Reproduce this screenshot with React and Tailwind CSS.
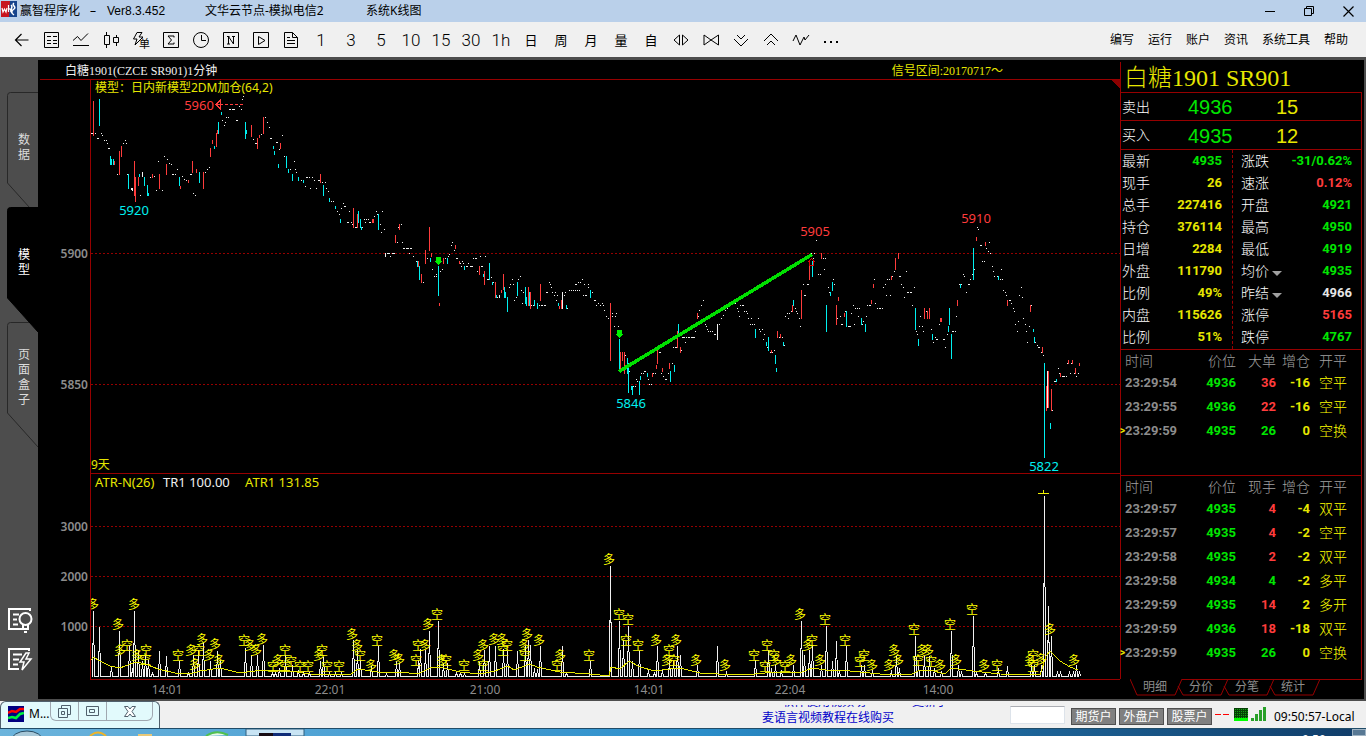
import React from "react";

const CJK = "font-['Noto_Sans','Noto_Sans_CJK_SC',sans-serif]";
const SONG = "font-['Liberation_Serif','Noto_Sans_CJK_SC',serif]";
const ARIAL = "font-['Liberation_Sans','Noto_Sans_CJK_SC',sans-serif]";
const NUMERIC = "font-['Roboto','Noto_Sans_CJK_SC',sans-serif]";

// bars are "x,top,bottom", one pixel wide
const RED_BARS =
  "93,101,136 134,161,196 135,177,202 119,151,175 121,146,157 114,161,165 138,177,186 159,174,189 152,174,178 166,164,175 192,161,173 188,180,183 180,186,189 196,169,173 203,172,189 210,148,157 212,140,144 216,133,147 217,130,134 251,125,137 257,138,149 259,135,138 263,117,134 280,143,149 320,174,183 " +
  "353,208,228 357,214,228 372,219,223 373,219,223 399,224,230 395,235,243 429,227,251 425,250,264 431,253,257 418,261,267 421,274,283 439,303,306 443,258,264 455,245,249 459,261,264 479,266,275 484,271,285 495,282,298 501,290,293 503,274,290 528,287,306 530,292,309 540,284,301 559,306,309 561,300,309 610,303,361 620,352,371 622,352,361 624,352,374 677,331,348 657,349,364 656,365,369 652,373,377 662,368,372 669,363,369 680,347,353 697,313,319 " +
  "809,265,280 801,290,319 792,305,312 777,331,338 780,334,338 771,350,353 821,253,259 838,297,301 836,305,325 844,313,317 873,284,288 871,300,304 895,258,270 898,253,259 891,276,280 924,308,319 927,311,319 929,308,319 940,318,322 941,318,322 957,300,306 976,237,241 985,242,246 1007,300,306 1030,305,312 1042,347,353 1046,386,411 1048,371,408 1051,389,411 1060,373,377 1068,360,364 1072,360,364 1075,368,374 1079,363,366";

const CYAN_BARS =
  "99,99,126 110,156,165 111,159,165 113,159,165 128,174,189 139,174,177 144,177,186 147,185,196 148,193,196 179,177,186 199,172,183 214,146,149 218,122,134 221,112,115 245,122,139 246,130,134 273,146,149 274,151,155 278,164,168 286,156,168 288,169,173 292,174,181 298,177,181 303,180,183 323,185,196 329,198,202 335,206,209 " +
  "340,219,223 358,211,223 360,219,228 361,227,230 378,214,230 417,261,267 419,266,280 430,258,262 438,266,296 447,258,264 464,266,270 483,274,277 489,263,280 492,282,285 496,295,298 504,287,298 505,292,298 507,297,312 517,282,296 525,287,304 526,297,306 529,292,306 534,300,306 537,303,309 558,303,306 566,305,309 590,290,298 619,339,371 627,358,374 628,363,393 631,386,390 632,386,395 639,381,395 640,376,380 647,373,377 670,371,382 674,365,372 678,324,337 " +
  "812,261,277 793,300,306 755,329,338 766,342,346 768,337,351 775,355,364 776,368,372 783,342,346 830,292,296 832,282,291 826,305,332 846,311,327 861,318,325 865,324,332 915,308,330 918,339,346 932,334,340 949,308,325 948,326,332 951,334,359 960,284,288 973,248,280 998,276,280 1033,329,332 1034,337,343 1044,363,458 1050,423,429 1056,379,382";

const WHITE_BARS = "131,188,190 132,188,191 142,172,177 385,253,257 499,295,298 562,292,309 717,324,340 1047,371,408";

// flat minutes are "x,y" single pixels
const TICKS =
  "91,133 92,133 95,133 97,138 98,138 101,133 102,135 104,140 106,140 107,143 108,148 109,148 117,174 123,143 125,140 126,143 127,174 140,195 150,177 154,176 156,190 162,190 158,161 164,156 167,159 169,163 171,164 172,174 173,174 175,174 177,169 182,176 184,179 186,180 190,174 191,174 193,193 195,195 205,172 207,169 209,167 222,120 224,125 225,122 226,117 228,117 229,109 230,109 232,109 233,109 234,109 236,120 237,120 239,106 241,109 243,96 242,99 253,139 255,143 256,143 261,134 265,117 267,122 269,127 270,138 271,138 276,142 277,142 279,149 282,135 284,156 290,169 294,161 295,169 296,172 301,180 306,177 307,177 309,177 305,186 310,188 312,177 314,180 316,188 318,180 319,180 322,182 325,182 326,188 328,191 331,201 333,201 337,211 339,214 " +
  "341,208 343,203 344,206 345,206 349,211 347,222 348,222 351,222 352,224 355,227 356,227 362,227 364,219 366,219 368,219 365,222 369,222 370,222 374,216 376,211 377,214 382,211 380,224 384,229 381,232 397,242 402,242 401,224 398,227 403,248 404,248 406,248 407,248 408,248 410,248 411,248 387,253 388,253 389,253 392,253 393,253 394,253 390,256 409,253 413,256 416,261 423,282 427,258 432,269 434,276 436,274 436,276 442,269 440,271 445,258 448,256 449,254 451,245 452,242 454,250 456,258 457,258 460,263 462,261 461,266 463,263 466,266 467,266 470,266 471,266 472,266 468,263 473,258 475,258 476,258 480,256 485,256 477,271 481,266 482,266 487,279 488,279 491,277 493,282 497,297 509,287 510,284 512,279 513,284 514,300 516,297 518,279 520,276 521,290 523,292 522,303 531,305 533,305 539,305 541,305 542,305 544,305 545,305 546,292 547,292 549,282 550,284 551,287 552,292 555,292 554,295 556,300 557,295 565,292 564,295 567,308 569,290 571,290 573,290 575,290 577,290 579,290 575,284 576,284 578,282 580,282 582,279 584,284 588,284 583,295 585,295 586,295 588,287 592,292 594,300 595,300 596,305 598,303 600,305 602,303 603,305 604,310 606,316 608,318 612,313 612,316 615,316 616,313 614,326 618,326 625,355 629,371 633,386 635,386 636,379 637,381 641,373 643,373 644,371 645,371 648,379 649,384 651,384 653,373 655,373 659,352 660,352 661,373 663,376 665,379 666,379 668,373 672,363 673,347 675,347 676,347 681,350 685,342 682,337 683,337 684,337 686,337 688,337 689,337 691,337 692,337 693,337 694,337 695,331 696,326 698,316 699,310 701,305 703,300 705,324 706,326 707,329 708,331 710,331 712,331 714,334 715,334 719,324 721,318 723,315 725,310 727,308 711,313 " +
  "735,303 737,308 738,311 739,316 740,305 742,305 743,305 744,311 746,311 747,313 748,318 751,318 750,324 752,324 754,324 758,318 759,329 762,329 760,331 764,334 763,339 767,347 770,352 772,352 774,350 779,337 782,337 784,345 785,316 787,313 789,313 788,318 791,311 795,308 796,311 797,313 799,318 800,326 803,284 807,284 808,284 804,295 805,295 811,253 814,253 813,258 816,240 818,274 820,274 824,269 825,258 823,258 828,287 829,292 833,279 834,284 837,318 840,316 841,324 842,324 845,311 848,326 849,326 850,326 851,313 854,324 853,305 855,308 857,308 859,308 858,316 862,324 863,321 866,316 867,305 869,305 870,305 874,279 875,303 877,308 879,308 880,308 882,308 883,287 885,284 887,279 889,279 886,295 890,295 892,276 894,271 899,276 900,276 901,284 903,287 904,297 906,271 907,292 908,292 910,292 911,292 914,287 912,305 916,331 917,334 919,326 922,326 920,316 923,331 926,311 931,329 933,342 935,337 936,339 937,339 939,324 943,339 944,339 945,347 947,334 952,331 953,331 955,331 956,316 959,284 961,284 963,274 964,276 966,292 968,284 969,284 970,279 972,274 974,269 977,227 978,229 980,245 981,245 982,261 984,261 986,248 988,251 989,242 990,253 992,266 993,271 994,276 997,276 1000,279 1002,279 1001,269 1003,290 1005,292 1006,295 1009,300 1010,300 1011,303 1013,308 1014,311 1015,324 1017,331 1018,321 1019,295 1021,287 1022,297 1023,318 1025,324 1026,331 1027,342 1029,326 1031,305 1035,342 1037,345 1038,347 1039,347 1041,352 1043,355 1052,410 1054,381 1055,381 1058,368 1059,373 1062,376 1063,376 1064,376 1066,376 1067,363 1071,363 1070,373 1074,373 1076,376 1078,373";

// peaks of the TR line, "x,y"
const SPIKES =
  "93,611 99,627 111,666 119,631 129,645 132,668 134,611 138,650 142,661 145,655 148,660 152,672 159,651 166,656 179,661 188,672 193,655 198,650 203,643 210,661 217,651 220,660 245,648 251,655 257,655 263,645 272,672 275,672 279,668 285,655 292,665 298,670 303,672 309,672 320,661 323,657 329,672 335,672 341,672 353,640 357,650 360,660 371,666 378,646 386,673 396,661 399,663 418,660 420,649 425,650 429,631 438,621 443,664 447,663 456,672 460,672 464,673 479,662 484,650 489,646 495,646 503,649 507,651 517,651 525,646 528,640 530,645 534,668 537,669 540,646 562,646 566,672 590,661 610,566 619,621 623,640 628,626 632,661 639,651 648,670 654,672 657,646 662,670 669,660 673,661 677,646 680,655 697,665 717,646 726,671 " +
  "755,660 768,650 771,668 775,665 781,670 793,665 801,621 804,655 809,650 812,645 821,665 826,626 832,661 836,641 839,670 846,646 861,665 864,665 872,670 891,670 896,656 899,668 915,636 918,665 924,656 929,656 934,668 941,671 951,631 958,665 961,671 973,616 976,672 985,672 998,668 1007,666 1031,665 1034,665 1041,665 1044,496 1048,606 1051,636 1057,671 1060,671 1069,671 1073,671 1076,665 1079,671";

const ATR_LINE =
  "91,660 94,657 98,660 110,666 120,668 133,663 138,662 148,665 158,669 175,673 190,674 200,671 220,668 240,673 262,670 290,671 310,674 350,675 358,669 378,672 400,672 418,674 430,668 440,667 460,672 480,674 495,671 508,666 514,670 530,664 537,667 560,672 590,674 609,676 611,667 620,669 629,661 640,667 655,671 670,669 680,668 700,673 735,675 755,674 775,672 800,673 812,668 826,670 850,671 880,674 910,675 918,671 930,670 945,674 951,668 973,671 1000,674 1040,675 1046,656 1050,651 1060,661 1070,667 1078,670";

const LONG_MARKS =
  "93,604 134,604 118,624 120,650 137,655 191,650 202,639 195,664 209,655 215,644 219,660 250,645 256,650 262,639 278,660 319,655 352,634 357,645 371,665 394,655 399,659 425,645 428,624 442,660 478,655 483,645 494,639 502,639 524,645 527,634 539,640 560,655 609,559 656,640 667,660 676,640 696,660 725,665 776,660 791,660 800,614 808,645 820,660 872,665 889,665 894,650 898,660 922,650 928,650 940,665 956,660 984,665 1030,660 1041,659 1050,629 1074,660";

const SHORT_MARKS =
  "127,645 146,650 145,659 178,655 199,650 244,640 273,666 285,650 291,661 285,666 300,666 308,666 322,650 327,666 339,666 360,655 377,640 416,660 418,645 437,614 446,660 464,665 483,665 503,650 507,645 525,655 557,665 589,655 619,614 628,619 626,640 638,645 669,650 674,660 754,655 767,645 774,655 765,666 785,666 812,640 825,619 845,640 860,661 864,655 914,629 918,660 931,661 950,624 972,609 997,665 1033,655 1033,666";

const parse = (text) => text.split(" ").map((item) => item.split(",").map(Number));
const barPath = (text) => parse(text).map(([x, a, b]) => `M${x} ${a}h1v${b - a}h-1z`).join("");
const tickPath = (text) => parse(text).map(([x, y]) => `M${x} ${y}h1v1h-1z`).join("");
const trPath = "M91 676" + parse(SPIKES).map(([x, y]) => `L${x - 1} 676L${x} ${y}L${x + 1} 676`).join("");

const QUOTES_LEFT = [
  ["最新", "4935", "text-[#00e600]"],
  ["现手", "26", "text-[#e6e600]"],
  ["总手", "227416", "text-[#e6e600]"],
  ["持仓", "376114", "text-[#e6e600]"],
  ["日增", "2284", "text-[#e6e600]"],
  ["外盘", "111790", "text-[#e6e600]"],
  ["比例", "49%", "text-[#e6e600]"],
  ["内盘", "115626", "text-[#e6e600]"],
  ["比例", "51%", "text-[#e6e600]"],
];

const QUOTES_RIGHT = [
  ["涨跌", "-31/0.62%", "text-[#00e600]"],
  ["速涨", "0.12%", "text-[#ff3c3c]"],
  ["开盘", "4921", "text-[#00e600]"],
  ["最高", "4950", "text-[#00e600]"],
  ["最低", "4919", "text-[#00e600]"],
  ["均价", "4935", "text-[#00e600]", true],
  ["昨结", "4966", "text-[#e6e6e6]", true],
  ["涨停", "5165", "text-[#ff3c3c]"],
  ["跌停", "4767", "text-[#00e600]"],
];

const BIG_TRADES = [
  ["23:29:54", "4936", "36", "-16", "空平", "text-[#ff3c3c]"],
  ["23:29:55", "4936", "22", "-16", "空平", "text-[#ff3c3c]"],
  ["23:29:59", "4935", "26", "0", "空换", "text-[#00e600]"],
];

const TRADES = [
  ["23:29:57", "4935", "4", "-4", "双平", "text-[#ff3c3c]"],
  ["23:29:57", "4935", "4", "-2", "空平", "text-[#ff3c3c]"],
  ["23:29:58", "4935", "2", "-2", "双平", "text-[#ff3c3c]"],
  ["23:29:58", "4934", "4", "-2", "多平", "text-[#00e600]"],
  ["23:29:59", "4935", "14", "2", "多开", "text-[#ff3c3c]"],
  ["23:29:59", "4936", "18", "-18", "双平", "text-[#ff3c3c]"],
  ["23:29:59", "4935", "26", "0", "空换", "text-[#00e600]"],
];

const Icon = ({ children, size = 18 }) => (
  <svg width={size} height={size} viewBox="0 0 18 18" fill="none" stroke="#000" strokeWidth="1" aria-hidden="true">
    {children}
  </svg>
);

const TOOLS = [
  ["返回", <Icon key="i"><path d="M16.5 9H4M9.5 3L3.5 9l6 6" strokeWidth="1.2" /></Icon>],
  ["报价", <Icon key="i"><path d="M2.5 1.5h14v15h-14zM5 5.5h4M11 5.5h4M5 9.5h4M11 9.5h4M5 12.5h4M11 12.5h4" /></Icon>],
  ["分时", <Icon key="i"><path d="M1 9.5L5.5 5.5 9 9.5 16 2.5M1 14.5h16" /></Icon>],
  ["K线", <Icon key="i"><path d="M2.5 4.5h5v9h-5zM4.5 1v3M4.5 14v3M11.5 6.5h5v5h-5zM14.5 4v2M14.5 12v3" /></Icon>],
  [
    "闪电下单",
    <span key="i" className="relative block h-[18px] w-[18px]">
      <svg width="12" height="16" viewBox="0 0 12 16" fill="none" stroke="#000" className="absolute left-0 top-0" aria-hidden="true">
        <path d="M5 1.5h5L7 6h4L3 14l2-6H1.5z" />
      </svg>
      <span className="absolute -bottom-px left-[7px] text-[11px] leading-[12px]">单</span>
    </span>,
  ],
  ["求和", <Icon key="i"><path d="M1.5 1.5h15v15h-15zM12 6.5v-1.5H6l3.5 4L6 13h6v-1.5" /></Icon>],
  ["时间", <Icon key="i"><circle cx="9" cy="9" r="7.5" /><path d="M9.5 4v5.5H14" /></Icon>],
  ["N", <Icon key="i"><path d="M1.5 1.5h15v15h-15zM5 5.5h2.5M5 13h3M6.5 5.5V13M6.5 5.5l5 7.5M11.5 13V5.5M10 5.5h3" /></Icon>],
  ["运行模型", <Icon key="i"><path d="M1.5 1.5h15v15h-15zM6.5 5.5v8l6.5-4z" /></Icon>],
  ["文档", <Icon key="i"><path d="M2.5 1.5h8l5 5v10h-13zM10.5 1.5v5h5M5 6.5h3M5 9.5h8M5 12.5h8" /></Icon>],
  ["1分钟", "1"],
  ["3分钟", "3"],
  ["5分钟", "5"],
  ["10分钟", "10"],
  ["15分钟", "15"],
  ["30分钟", "30"],
  ["1小时", "1h"],
  ["日线", "日"],
  ["周线", "周"],
  ["月线", "月"],
  ["量", "量"],
  ["自定义", "自"],
  ["放宽", <Icon key="i"><path d="M7.5 4v10L2 9zM10.5 4v10L16 9z" /></Icon>],
  ["缩窄", <Icon key="i"><path d="M2 4v10l7-5zM16.5 4v10L9 9z" /></Icon>],
  ["下移", <Icon key="i"><path d="M5 4l4 4 4-4M2 8l7 7 7-7" /></Icon>],
  ["上移", <Icon key="i"><path d="M5 14l4-4 4 4M2 10l7-7 7 7" /></Icon>],
  ["指标", <Icon key="i"><path d="M1 10l3-6 4 10 4-8 1 3 4-5" /></Icon>],
  ["更多", <Icon key="i"><path d="M2 10h2v2h-2zM8 10h2v2h-2zM14 10h2v2h-2z" fill="#000" stroke="none" /></Icon>],
];

const TitleBar = () => (
  <header className="flex h-[22px] items-center bg-[#bad0ea] text-xs text-black">
    <svg width="16" height="16" viewBox="0 0 16 16" className="mb-[5px] ml-px" aria-hidden="true">
      <path fill="#c8141e" d="M0 0h11v16H0z" />
      <path fill="#17448c" d="M9 0h7v16H8z" />
      <path d="M13 2c-3 2 3 4 0 6s-3 4 0 6M10 4c3 2-2 5 1 8" stroke="#fff" fill="none" strokeWidth="1.5" />
      <path d="M1 7l1 4 1.5-3L5 11l1-4M7.5 4v7M7.5 8.5C9 7 10 8 10 11" stroke="#fff" fill="none" strokeWidth="1.2" />
    </svg>
    <h1 className="ml-[3px] flex leading-5">
      <span className="w-[70px]">赢智程序化</span>
      <span className="w-[17px]">–</span>
      <span className={`w-[98px] text-[12px] ${ARIAL}`}>Ver8.3.452</span>
      <span className="w-[161px]">文华云节点-模拟电信2</span>
      <span>系统K线图</span>
    </h1>
    <div className="ml-auto flex items-center gap-[7px] pr-[2px]">
      <button aria-label="最小化" className="grid h-[22px] w-8 place-items-center">
        <svg width="10" height="10" stroke="#000" fill="none"><path d="M0 5.5h10" /></svg>
      </button>
      <button aria-label="还原" className="grid h-[22px] w-8 place-items-center">
        <svg width="10" height="10" stroke="#000" fill="none"><path d="M.5 2.5h7v7h-7zM2.5 2.5v-2h7v7h-2" /></svg>
      </button>
      <button aria-label="关闭" className="grid h-[22px] w-8 place-items-center">
        <svg width="11" height="11" stroke="#000" fill="none" strokeWidth="1.2"><path d="M.5.5l10 10M10.5.5l-10 10" /></svg>
      </button>
    </div>
  </header>
);

const Toolbar = () => (
  <nav className="flex h-[35px] items-center bg-[#f0f0f0] pl-[6px] pr-[18px] text-black">
    {TOOLS.map(([label, content]) => (
      <button
        key={label}
        aria-label={label}
        className={`grid h-[30px] w-[30px] shrink-0 place-items-center leading-none ${
          /^\d/.test(label) ? "pt-[2px] font-['Roboto'] text-[17px] font-light" : "pt-px text-[13px]"
        }`}
      >
        {content}
      </button>
    ))}
    <div className="ml-auto flex gap-[14px] whitespace-nowrap text-xs">
      {["编写", "运行", "账户", "资讯", "系统工具", "帮助"].map((item) => (
        <button key={item}>{item}</button>
      ))}
    </div>
  </nav>
);

const SideTab = ({ text, active }) => (
  <button className={`relative h-[115px] w-[31px] ${active ? "z-10 text-white" : "text-[#dcdcdc]"}`}>
    <svg width="31" height="126" viewBox="0 0 31 126" className="absolute left-0 top-0" aria-hidden="true">
      <path
        d="M31 .5H3.5Q.5.5.5 3.5V91L31 125"
        fill={active ? "#000" : "#4d4d4d"}
        stroke={active ? "#000" : "#282828"}
      />
    </svg>
    <span className="relative ml-[11px] block w-3 pb-[6px] text-xs leading-[15px]">{text}</span>
  </button>
);

const Sidebar = () => (
  <aside className="flex w-[38px] shrink-0 flex-col pl-[7px] pt-8">
    <SideTab text="数据" />
    <SideTab text="模型" active />
    <SideTab text="页面盒子" />
    <div className="mb-[26px] mt-auto flex flex-col gap-[14px]">
      <button aria-label="帮助提示">
        <svg width="26" height="26" viewBox="0 0 26 26" fill="none" stroke="#fff" strokeWidth="2">
          <path d="M23 4V2H2v20h13M6 7.5h6M6 12.5h4M6 17.5h5" />
          <circle cx="18.5" cy="12" r="6" />
          <path d="M16 18v4h5v-4M17 25h3" />
        </svg>
      </button>
      <button aria-label="快速编辑">
        <svg width="26" height="26" viewBox="0 0 26 26" fill="none" stroke="#fff" strokeWidth="2">
          <path d="M22 4V2H2v20h10M6 7.5h9M6 12.5h6M6 17.5h5" />
          <path d="M19 6l-6 9h4l-2 8 9-11h-5l3-6z" strokeWidth="1.5" />
        </svg>
      </button>
    </div>
  </aside>
);

const PricePane = () => (
  <svg viewBox="38 80 1082 394" className="block w-full" shapeRendering="crispEdges" role="img" aria-label="白糖1901 1分钟">
    <path d="M91 253.5H1120M91 384.5H1120" stroke="#960000" strokeDasharray="2 2" />
    <path d="M90.5 80V474M91 473.5H1120" stroke="#960000" />
    <path d="M1110 79h10v10z" fill="#8c0000" />
    <path d={barPath(CYAN_BARS)} fill="#00f0f0" />
    <path d={barPath(RED_BARS)} fill="#ff3c3c" />
    <path d={barPath(WHITE_BARS)} fill="#f0f0f0" />
    <path d={tickPath(TICKS)} fill="#f0f0f0" />
    <path d="M619 371.5L812 254.5" stroke="#00e000" strokeWidth="3.5" />
    <path d="M436 257h5v4h1l-3.5 4-3.5-4h1zM617 330h5v4h1l-3.5 4-3.5-4h1z" fill="#00f000" />
    <path d="M809.5 265.5v-4h-1l3-3 3 3h-1v4z" stroke="#e00000" fill="none" />
    <path d="M243 104.5H221" stroke="#ff3c3c" strokeDasharray="3 2" />
    <path d="M216 104.5l4-4v8zM216 104.5h5" stroke="#ff3c3c" fill="none" />
    <g fontSize="12" className={CJK}>
      <text x="95" y="92" fill="#e6e600">模型：日内新模型2DM加仓(64,2)</text>
      <text x="91" y="469" fill="#e6e600">9天</text>
      <g fontSize="13" textAnchor="middle">
        <text x="199" y="110" fill="#ff3c3c">5960</text>
        <text x="815" y="236" fill="#ff3c3c">5905</text>
        <text x="976" y="223" fill="#ff3c3c">5910</text>
        <text x="134" y="215" fill="#00f0f0">5920</text>
        <text x="631" y="408" fill="#00f0f0">5846</text>
        <text x="1044" y="471" fill="#00f0f0">5822</text>
      </g>
      <g fill="#8c8c8c" textAnchor="end" fontWeight="600">
        <text x="88" y="258">5900</text>
        <text x="88" y="389">5850</text>
      </g>
    </g>
  </svg>
);

const AtrPane = () => (
  <svg viewBox="38 474 1082 225" className="block w-full" shapeRendering="crispEdges" role="img" aria-label="ATR-N(26)">
    <defs>
      <clipPath id="plot">
        <path d="M91 474H1120V679H91z" />
      </clipPath>
    </defs>
    <path d="M91 526.5H1120M91 576.5H1120M91 626.5H1120" stroke="#960000" strokeDasharray="2 2" />
    <path d="M90.5 474V679.5H1120" stroke="#960000" fill="none" />
    <path d={trPath + "L1080 676"} stroke="#f0f0f0" fill="none" transform="translate(.5 .5)" strokeLinejoin="bevel" />
    <polyline points={ATR_LINE} stroke="#e6e600" fill="none" />
    <path d="M1038 493.5h11M1043.5 490v3" stroke="#f0f000" />
    <g className={CJK} fontSize="12" fill="#ffff00" textAnchor="middle" clipPath="url(#plot)">
      {parse(LONG_MARKS).map(([x, y], i) => (
        <text key={i} x={x} y={y + 5}>多</text>
      ))}
      {parse(SHORT_MARKS).map(([x, y], i) => (
        <text key={i} x={x} y={y + 5}>空</text>
      ))}
    </g>
    <g className={CJK} fontSize="12">
      <g fontSize="13">
        <text x="95" y="487" fill="#e6e600">ATR-N(26)</text>
        <text x="163" y="487" fill="#f0f0f0">TR1 100.00</text>
        <text x="245" y="487" fill="#e6e600">ATR1 131.85</text>
      </g>
      <g fill="#8c8c8c" textAnchor="end" fontWeight="600">
        <text x="88" y="531">3000</text>
        <text x="88" y="581">2000</text>
        <text x="88" y="631">1000</text>
      </g>
      <g fill="#8c8c8c" textAnchor="middle">
        <text x="167" y="694">14:01</text>
        <text x="330" y="694">22:01</text>
        <text x="485" y="694">21:00</text>
        <text x="649" y="694">14:01</text>
        <text x="790" y="694">22:04</text>
        <text x="938" y="694">14:00</text>
      </g>
    </g>
  </svg>
);

const Chart = () => (
  <section className="min-w-0 flex-1">
    <div className={`ml-[2px] flex h-5 justify-between border-b border-[#960000] pl-[25px] pr-[117px] text-xs leading-[22px] ${SONG}`}>
      <span className="text-[#f0f0f0]">白糖1901(CZCE SR901)1分钟</span>
      <span className="text-[#e6e600]">信号区间:20170717～</span>
    </div>
    <PricePane />
    <AtrPane />
  </section>
);

const QuoteList = ({ rows, className }) => (
  <dl className={className}>
    {rows.map(([name, value, color, menu], i) => (
      <div key={i} className="flex h-[22px] items-center justify-between">
        <dt className="flex items-center text-sm font-light text-white">
          {name}
          {menu && <span className="ml-[3px] mt-1 border-x-[5px] border-t-[5px] border-x-transparent border-t-[#a0a0a0]" />}
        </dt>
        <dd className={`text-[13px] font-bold ${NUMERIC} ${color}`}>{value}</dd>
      </div>
    ))}
  </dl>
);

const TradeTable = ({ volume, rows, className }) => (
  <div className={`border-t border-[#960000] ${className}`}>
    <table className={`w-full table-fixed text-right text-[13px] font-bold ${NUMERIC}`}>
      <thead className="text-sm text-[#a0a0a0]">
        <tr className="h-[21px] leading-5 [&>th]:p-0 [&>th]:font-light">
          <th className="w-[75px] text-left"><span className="pl-1">时间</span></th>
          <th className="w-[40px]">价位</th>
          <th className="w-[40px]">{volume}</th>
          <th className="w-[34px]">增仓</th>
          <th className="text-left"><span className="pl-[9px]">开平</span></th>
        </tr>
      </thead>
      <tbody>
        {rows.map(([time, price, lots, change, type, color], i) => (
          <tr key={i} className="h-6 leading-5">
            <td className="relative pl-1 text-left text-[#8c8c8c]">
              {i === rows.length - 1 && <span className="absolute -left-px text-[10px] text-[#e6e600]">&gt;</span>}
              {time}
            </td>
            <td className="text-[#00e600]">{price}</td>
            <td className={color}>{lots}</td>
            <td className="text-[#e6e600]">{change}</td>
            <td className="pl-[9px] text-left text-sm font-light text-[#ffff00]">{type}</td>
          </tr>
        ))}
      </tbody>
    </table>
  </div>
);

const QuotePanel = () => (
  <section className="flex w-[244px] shrink-0 flex-col pr-[2px] pt-[2px]">
    <div className="flex flex-1 flex-col border-l border-[#960000]">
      <h2 className={`h-[30px] whitespace-nowrap pl-[3px] text-2xl font-light leading-[32px] text-[#e6e600] ${SONG}`}>白糖1901 SR901</h2>
      <div className="flex-1 border-r border-[#960000]">
        {[["卖出", "4936", "15", "h-[28px]"], ["买入", "4935", "12", "h-[29px]"]].map(([name, price, lots, height]) => (
          <div key={name} className={`flex items-center border-t border-[#960000] pl-px ${height}`}>
            <span className="w-[66px] text-sm font-light text-white">{name}</span>
            <span className={`w-[88px] pt-px text-xl text-[#00e600] ${ARIAL}`}>{price}</span>
            <span className={`pt-px text-xl text-[#e6e600] ${ARIAL}`}>{lots}</span>
          </div>
        ))}
        <div className="flex h-[200px] border-t border-[#960000]">
          <QuoteList rows={QUOTES_LEFT} className="w-[112px] border-r border-dashed border-[#960000] pl-px pr-[10px]" />
          <QuoteList rows={QUOTES_RIGHT} className="flex-1 pl-2 pr-[9px]" />
        </div>
        <TradeTable volume="大单" rows={BIG_TRADES} className="h-[126px]" />
        <TradeTable volume="现手" rows={TRADES} className="h-[204px]" />
      </div>
    </div>
    <div className="flex h-5 pl-[10px] text-xs text-[#8c8c8c]">
      {["明细", "分价", "分笔", "统计"].map((name, i) => (
        <button key={name} className="relative h-4 w-[46px] pl-1 leading-4">
          <svg width="55" height="17" viewBox="0 0 55 17" fill="none" stroke="#960000" className="absolute left-0 top-0" aria-hidden="true">
            <path d={i === 0 ? "M0 0l7 16h38l7-16" : "M2 7l5 9h38l7-16M6 .5h48"} />
          </svg>
          {name}
        </button>
      ))}
      <span className="ml-[8px] h-px flex-1 bg-[#960000]" />
    </div>
  </section>
);

const StatusBar = () => (
  <footer className="flex h-[27px] items-center bg-[#f0f0f0] text-xs text-black">
    <div className="flex h-full w-[160px] items-start rounded-t-md border border-b-0 border-[#50606c] bg-[#e2fafc] pl-[7px]">
      <svg width="16" height="16" viewBox="0 0 16 16" className="mt-1 shrink-0" aria-hidden="true">
        <path fill="#000080" d="M0 0h16v16H0z" />
        <path d="M0 7l4-2 4 1 4-3h4" stroke="#f00" strokeWidth="2.5" fill="none" />
        <path d="M0 12l4-1 4 1 4-4 4-1" stroke="#00f040" strokeWidth="2.5" fill="none" />
      </svg>
      <span className="ml-[5px] mt-[2px] w-[21px] text-xs leading-5">M...</span>
      <div className="mr-[6px] flex h-[19px] flex-1 divide-x divide-[#a0a8b0] rounded-b-md border border-t-0 border-[#a0a8b0]">
        <button aria-label="还原窗口" className="grid w-7 place-items-center">
          <svg width="13" height="13" stroke="#50606c" fill="none"><path d="M.5 3.5h9v9h-9zM3.5 6.5h3v3h-3zM3.5 3v-2.5h9v9H10" /></svg>
        </button>
        <button aria-label="最大化窗口" className="grid w-7 place-items-center">
          <svg width="13" height="11" stroke="#50606c" fill="none"><path d="M.5.5h12v9H.5zM3.5 3.5h5v3h-5z" /></svg>
        </button>
        <button aria-label="关闭窗口" className="grid flex-1 place-items-center">
          <svg width="12" height="11" stroke="#50606c" fill="#fff"><path d="M.5.5h3.5l2 2.5 2-2.5h3.5l-3.5 5 3.5 5H8l-2-2.5-2 2.5H.5l3.5-5z" /></svg>
        </button>
      </div>
    </div>
    <div className="ml-auto flex h-5 w-[200px] flex-col justify-end overflow-hidden whitespace-nowrap text-[#0000c8]">
      <a href="#update" className="pl-5 leading-[18px]">软件使用视频功<span className="pl-[46px]">更新了</span></a>
      <a href="#video" className="leading-[14px]">麦语言视频教程在线购买</a>
    </div>
    <input aria-label="代码" className="ml-[48px] h-[18px] w-[55px] border border-[#dde3ea] border-t-[#abadb3] bg-white" />
    <div className="ml-[6px] mt-1 flex gap-[3px]">
      {["期货户", "外盘户", "股票户"].map((name) => (
        <button key={name} className="h-[17px] w-[45px] border border-[#505050] bg-[#808080] text-xs leading-[14px] text-white">
          {name}
        </button>
      ))}
    </div>
    <svg width="55" height="16" viewBox="0 0 55 16" className="ml-[3px]" aria-hidden="true">
      <path d="M0 7h6v1H0zM8 7h6v1H8z" fill="#f00" />
      <path fill="#064006" d="M19 1h14v11H19z" />
      <path d="M20 2.5h13M20 4.5h13M20 6.5h13M20 8.5h13M20 10.5h13" stroke="#14a014" strokeDasharray="1 1" />
      <path fill="#00ff00" d="M19 11h14v3H19z" />
      <path fill="#28a028" d="M36 11h3v3h-3zM40 7h3v7h-3zM44 3h3v11h-3zM48 0h3v14h-3z" />
    </svg>
    <span className="ml-[4px] w-[92px] pt-1 text-[12px] leading-4">09:50:57-Local</span>
  </footer>
);

const Taskbar = () => (
  <div className="flex h-2 items-end justify-between overflow-hidden border-t border-[#204c68] bg-linear-to-r from-[#6cb4dc] via-[#2c90cc] to-[#103c68]">
    <svg width="310" height="7" viewBox="0 0 310 7" aria-hidden="true">
      <ellipse cx="27" cy="12" rx="16" ry="10" fill="#a8c8d8" stroke="#284c64" />
      <path d="M90 7q8-7 16 0" stroke="#f0b428" strokeWidth="2" fill="none" />
      <path d="M138 5h14v2h-14z" fill="#e8c878" />
      <path d="M206 7q10-7 22-1" stroke="#50c050" strokeWidth="2" fill="#e8f8e8" />
      <path d="M246 0h58v7h-58z" fill="#c8e4f4" stroke="#306080" />
      <path d="M259 4h14v3h-14z" fill="#180c14" />
      <path d="M273 4h18v3h-18z" fill="#102c78" />
    </svg>
    <div className="flex h-full">
      <time className="h-full w-[50px] pt-1 text-xs leading-[14px] text-white">9:50</time>
      <button aria-label="显示桌面" className="h-full w-[14px] border border-[#a0b4c4] bg-[#587894]" />
    </div>
  </div>
);

export default function App() {
  return (
    <div className={`flex min-h-screen flex-col bg-[#4d4d4d] ${CJK}`}>
      <TitleBar />
      <Toolbar />
      <main className="flex flex-1 pb-[2px] pr-[2px] pt-[3px]">
        <Sidebar />
        <div className="flex min-w-0 flex-1 bg-black">
          <Chart />
          <QuotePanel />
        </div>
      </main>
      <StatusBar />
      <Taskbar />
    </div>
  );
}
